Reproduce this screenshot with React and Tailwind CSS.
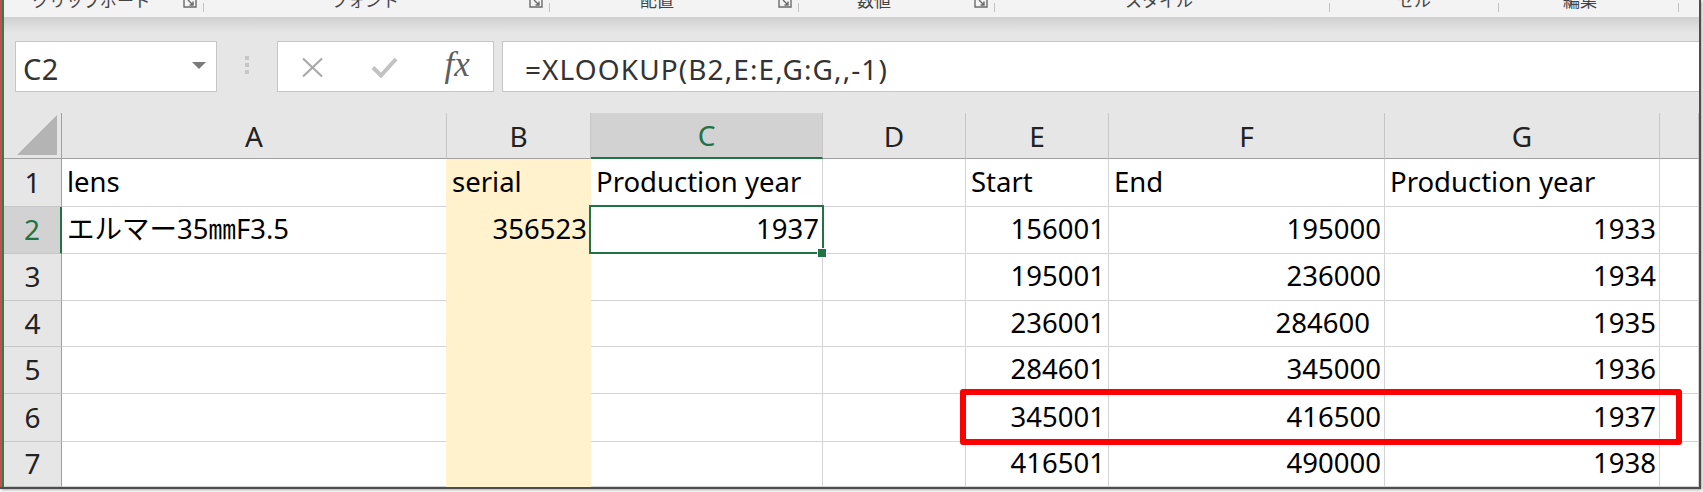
import React from "react";
import clsx from "clsx";

const GRID = "grid grid-cols-[58px_385px_144px_232px_143px_143px_276px_275px_39px]";

const ribbonGroups = [
  { w: "w-[200px]", label: "クリップボード", ml: "ml-[28px]", launcher: true },
  { w: "w-[346px]", label: "フォント", ml: "ml-[127px]", launcher: true },
  { w: "w-[249px]", label: "配置", ml: "ml-[90px]", launcher: true },
  { w: "w-[196px]", label: "数値", ml: "ml-[58px]", launcher: true },
  { w: "w-[335px]", label: "スタイル", ml: "ml-[130px]" },
  { w: "w-[169px]", label: "セル", ml: "ml-[67px]" },
  { w: "w-[180px]", label: "編集", ml: "ml-[64px]" },
];

const rows = [
  { n: 1, h: "h-[48px]", a: "lens", b: "serial", c: "Production year", e: "Start", f: "End", g: "Production year", text: true },
  { n: 2, h: "h-[47px]", a: "エルマー35㎜F3.5", b: "356523", c: "1937", e: "156001", f: "195000", g: "1933" },
  { n: 3, h: "h-[47px]", e: "195001", f: "236000", g: "1934" },
  { n: 4, h: "h-[46px]", e: "236001", f: "284600", g: "1935", fGap: true },
  { n: 5, h: "h-[47px]", e: "284601", f: "345000", g: "1936" },
  { n: 6, h: "h-[48px]", e: "345001", f: "416500", g: "1937" },
  { n: 7, h: "h-[45px]", e: "416501", f: "490000", g: "1938" },
];

const Launcher = () => (
  <svg width="14" height="12" viewBox="0 0 14 12" className="mt-[-3px]">
    <path d="M1 1v9h12V1" fill="none" stroke="#6b6b6b" strokeWidth="1.4" />
    <path d="M5 3l5 5M10 4.5V8H6.5" fill="none" stroke="#6b6b6b" strokeWidth="1.4" />
  </svg>
);

const Cell = ({ children, right, className }) => (
  <div
    className={clsx(
      "relative flex items-center whitespace-nowrap border-r border-b border-[#d4d4d4] pb-[2px] text-black",
      right ? "justify-end pr-[3px]" : "pl-[5px]",
      className
    )}
  >
    {children}
  </div>
);

const Ribbon = () => (
  <div className="flex h-[17px] shrink-0 overflow-hidden bg-[#f3f3f3] font-['Noto_Sans_CJK_JP',sans-serif] text-[17px] leading-[17px] text-[#444]">
    {ribbonGroups.map((g) => (
      <div key={g.label} className={clsx("flex shrink-0", g.w)}>
        <div className={clsx("mt-[-9px]", g.ml)}>{g.label}</div>
        <div className="flex-1" />
        {g.launcher && (
          <div className="mr-[6px]">
            <Launcher />
          </div>
        )}
        <div className="mt-[3px] h-[9px] w-px bg-[#c3c3c3]" />
      </div>
    ))}
  </div>
);

const FormulaBar = () => (
  <div className="flex h-[96px] shrink-0 items-start bg-[linear-gradient(to_bottom,#d0d0d0,#e6e6e6_16px)] pt-[24px] font-['Noto_Sans',sans-serif]">
    <div className="ml-[11px] flex h-[51px] w-[202px] items-center justify-between border border-[#c6c6c6] bg-white pl-[7px] pr-[10px] pt-[5px]">
      <span className="text-[29px] tracking-[0.5px] text-[#333]">C2</span>
      <svg width="14" height="7" viewBox="0 0 14 7" className="mt-[-8px]">
        <path d="M0 0h14L7 7z" fill="#7a7a7a" />
      </svg>
    </div>
    <div className="ml-[28px] mt-[15px] flex w-[4px] flex-col gap-[3px]">
      <div className="h-[4px] w-[4px] bg-[#c6c6c6]" />
      <div className="h-[4px] w-[4px] bg-[#c6c6c6]" />
      <div className="h-[4px] w-[4px] bg-[#c6c6c6]" />
    </div>
    <div className="ml-[28px] flex h-[51px] w-[217px] items-center justify-around border border-[#c6c6c6] bg-white">
      <svg width="23" height="21" viewBox="0 0 23 21" className="mt-[2px]">
        <path d="M2 1.5l19 18M21 1.5l-19 18" stroke="#a9a9a9" strokeWidth="2.2" fill="none" />
      </svg>
      <svg width="27" height="22" viewBox="0 0 27 22">
        <path d="M2 11.5l8 8L25 3" stroke="#c2c2c2" strokeWidth="4" fill="none" />
      </svg>
      <span className="mt-[-4px] font-['Liberation_Serif',serif] text-[35px] italic leading-none text-[#5e5e5e]">fx</span>
    </div>
    <div className="ml-[8px] flex h-[51px] flex-1 items-center border border-r-0 border-[#c6c6c6] bg-white pl-[22px] pt-[5px]">
      <span className="text-[28px] tracking-[1.1px] text-[#333]">=XLOOKUP(B2,E:E,G:G,,-1)</span>
    </div>
  </div>
);

const HeaderRow = () => {
  const letters = ["A", "B", "C", "D", "E", "F", "G", ""];
  return (
    <div className={clsx(GRID, "h-[46px] shrink-0 bg-[#e6e6e6] text-[28px] text-[#222]")}>
      <div className="flex items-end justify-end border-r border-b border-[#a0a0a0] pb-[3px] pr-[4px]">
        <svg width="40" height="40" viewBox="0 0 40 40">
          <path d="M40 0V40H0z" fill="#b4b4b4" />
        </svg>
      </div>
      {letters.map((l, i) =>
        l === "C" ? (
          <div key={i} className="flex items-center justify-center border-r border-r-[#c6c6c6] border-b-2 border-b-[#217346] bg-[#d2d2d2] text-[#217346]">
            {l}
          </div>
        ) : (
          <div key={i} className="flex items-center justify-center border-r border-r-[#c6c6c6] border-b border-b-[#a0a0a0]">
            {l}
          </div>
        )
      )}
    </div>
  );
};

const DataRow = ({ r }) => (
  <div className={clsx(GRID, r.h, "shrink-0 text-[27.5px]")}>
    <div
      className={clsx(
        "flex items-center justify-center border-b border-b-[#c6c6c6] pb-[2px] text-[28px]",
        r.n === 2
          ? "border-r-2 border-r-[#217346] bg-[#d2d2d2] text-[#217346]"
          : "border-r border-r-[#a0a0a0] bg-[#e6e6e6] text-[#222]"
      )}
    >
      {r.n}
    </div>
    <Cell className="border-r-[#fff2cc]">{r.a}</Cell>
    <Cell right={!r.text} className="border-[#fff2cc] bg-[#fff2cc]">
      {r.b}
    </Cell>
    <Cell right={!r.text} className={r.n === 2 ? "z-10" : ""}>
      {r.c}
      {r.n === 2 && (
        <>
          <div className="pointer-events-none absolute bottom-[-1px] left-[-2px] right-[-2px] top-[-2px] border-[2.5px] border-[#217346]" />
          <div className="absolute bottom-[-5px] right-[-5px] h-[10px] w-[10px] border border-white bg-[#217346]" />
        </>
      )}
    </Cell>
    <Cell />
    <Cell right={!r.text}>{r.e}</Cell>
    <Cell right={!r.text} className={r.fGap ? "pr-[14px]" : ""}>
      {r.f}
    </Cell>
    <Cell right={!r.text}>{r.g}</Cell>
    <Cell />
  </div>
);

export default function App() {
  return (
    <div className="h-[492px] w-[1703px] overflow-hidden bg-white">
      <div className="relative flex h-[489px] w-[1701px] border-b-2 border-r-2 border-[#4d4d4d] shadow-[1px_1px_3px_rgba(0,0,0,0.35)]">
        <div className="w-[2px] shrink-0 bg-[#c0504d]" />
        <div className="w-[2px] shrink-0 bg-[#2f7d4f]" />
        <div className="flex min-w-0 flex-1 flex-col overflow-hidden bg-white font-['Noto_Sans','Noto_Sans_CJK_JP',sans-serif]">
          <Ribbon />
          <FormulaBar />
          <HeaderRow />
          {rows.map((r) => (
            <DataRow key={r.n} r={r} />
          ))}
        </div>
        <div className="pointer-events-none absolute left-[960px] top-[389px] h-[56px] w-[722px] rounded-[3px] border-[6px] border-[#ff0000]" />
      </div>
    </div>
  );
}
